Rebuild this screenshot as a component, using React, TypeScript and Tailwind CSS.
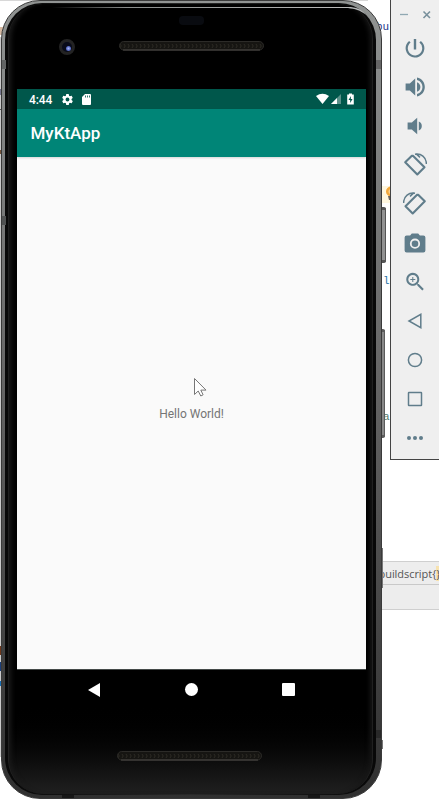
import type { ReactNode } from "react";

function Ic({ children, size = 24 }: { children: ReactNode; size?: number }) {
  return (
    <div className="flex h-[39px] items-center justify-center">
      <svg width={size} height={size} viewBox="0 0 24 24" fill="#607d8b">
        {children}
      </svg>
    </div>
  );
}

function Rotate() {
  return (
    <>
      <path d="M8.600 2.900 2.200 9.300 14.300 21.400 21.500 14.200 10.200 2.900Z" fill="none" stroke="#607d8b" strokeWidth="2.100" strokeLinejoin="round" />
      <path d="M12 1.300C18 .3 23.300 4 23.400 11M13 .8l4 3.600" fill="none" stroke="#607d8b" strokeWidth="1.500" />
    </>
  );
}

function Toolbar() {
  return (
    <div className="absolute left-[390px] top-0 h-[460px] w-[60px] border-b border-l border-[#444] bg-[#efefef]">
      <div className="flex h-[28px] w-[49px] items-center pl-[9px] pt-[2px]">
        <svg width="32" height="10" viewBox="0 0 32 10" fill="none" stroke="#78909c">
          <path d="M0 4.500h8" stroke="#90a8b2" strokeWidth="1.300" />
          <path d="m23.500 1.500 6.500 6.500m0-6.500-6.500 6.500" strokeWidth="1.600" />
        </svg>
      </div>
      <div className="flex w-[48px] flex-col">
        <Ic><path d="M13.200 3h-2.400v10.500h2.400V3zm4.700 1.900-1.500 1.700A7 7 0 0 1 19.200 12a7.200 7.200 0 1 1-11.600-5.400L6.100 4.900A9.300 9.300 0 0 0 2.600 12a9.400 9.400 0 1 0 15.300-7.100z" /></Ic>
        <Ic><path d="M2.600 8.400v7h4.200l5.400 5V3.500l-5.400 4.900zM14 7.200c4.500 1.400 4.500 8.200 0 9.600zM14 2.600V5c7.300 1.900 7.300 12.100 0 14v2.400c10.400-2 10.400-16.800 0-18.800z" /></Ic>
        <Ic><path d="M4.600 8.500v7h4.200l5.400 4.700V3.800L8.800 8.500zM15.800 7.500c4 1.400 4 7.600 0 9z" /></Ic>
        <Ic><Rotate /></Ic>
        <Ic><g transform="translate(24 0) scale(-1 1)"><Rotate /></g></Ic>
        <Ic>
          <path fillRule="evenodd" d="M8.800 2.600 7.100 4.600H3.600A2 2 0 0 0 1.600 6.600v12.800a2 2 0 0 0 2 2h16.800a2 2 0 0 0 2-2V6.600a2 2 0 0 0-2-2h-3.500l-1.700-2zM12 7.600a5.100 5.100 0 1 1 0 10.200 5.100 5.100 0 0 1 0-10.200z" />
          <circle cx="12" cy="12.700" r="3.300" />
        </Ic>
        <Ic>
          <path d="M15.500 14h-.8l-.3-.3A6.500 6.500 0 1 0 13.700 14.400l.3.3v.8l5 5 1.500-1.500zM9.500 14a4.500 4.500 0 1 1 0-9 4.500 4.500 0 0 1 0 9zM12 10h-2v2H9v-2H7V9h2V7h1v2h2z" transform="translate(.3 -.1)" />
        </Ic>
        <Ic><path d="M17.800 5.400v13.200L6 12z" fill="none" stroke="#607d8b" strokeWidth="1.500" /></Ic>
        <Ic><circle cx="12" cy="12" r="6.600" fill="none" stroke="#607d8b" strokeWidth="1.500" /></Ic>
        <Ic><rect x="5.500" y="5.500" width="13" height="13" rx=".5" fill="none" stroke="#607d8b" strokeWidth="1.500" /></Ic>
        <Ic><circle cx="6" cy="12" r="2" /><circle cx="12" cy="12" r="2" /><circle cx="18" cy="12" r="2" /></Ic>
      </div>
    </div>
  );
}

function Editor() {
  return (
    <div className="absolute inset-0 overflow-hidden bg-white">
      <div className="absolute left-0 top-0 h-px w-[368px] bg-[#d8d8d8]" />
      <div className="absolute left-0 top-[27px] h-2 w-2 bg-[#d5b9a2]" />
      <div className="absolute left-0 top-[37px] h-[720px] w-px bg-[#c9c9c9]" />
      <div className="absolute left-0 top-[89px] h-[6px] w-[3px] bg-[#77778f]" />
      <div className="absolute left-0 top-[109px] h-px w-[3px] bg-[#555]" />
      <div className="absolute left-0 top-[150px] h-[4px] w-[3px] bg-[#76553b]" />
      <div className="absolute left-0 top-[646px] h-[9px] w-[3px] bg-[#70381b]" />
      <div className="absolute left-0 top-[662px] h-[9px] w-[3px] bg-[#1b3f7c]" />
      <div className="absolute left-0 top-[681px] h-[5px] w-[3px] bg-[#1870b8]" />
      <span className="absolute left-[376px] top-[20px] font-['Liberation_Mono',monospace] text-[11px] leading-[14px] text-[#26378a]">bu</span>
      <div className="absolute left-[382px] top-[186px] h-[17px] w-2 bg-[#fff7df]" />
      <svg className="absolute left-[385px] top-[186px]" width="10" height="15" viewBox="0 0 10 15">
        <circle cx="6" cy="5.500" r="5" fill="#f3a83c" />
        <circle cx="6" cy="5.500" r="2.500" fill="#f9cf8c" />
        <path d="M3 10h6v4H4z" fill="#6b6259" />
      </svg>
      <span className="absolute left-[383px] top-[274px] font-['Liberation_Mono',monospace] text-[11px] leading-[14px] text-[#2874a6]">l</span>
      <span className="absolute left-[383px] top-[410px] font-['Liberation_Mono',monospace] text-[11px] leading-[14px] text-[#52796b]">a</span>
      <div className="absolute left-[370px] top-[561px] h-[49px] w-[69px] border-y border-[#cfcfcf] bg-[#ededed]">
        <div className="h-[23px] whitespace-nowrap border-b border-[#c9c9c9] pl-[8.500px] font-['Open_Sans',sans-serif] text-[11px] leading-[24px] tracking-[-0.05px] text-[#555]">
          buildscript{"{"}<span className="bg-[#f7e2af]">{"}"}</span>
        </div>
      </div>
    </div>
  );
}

function Grille() {
  return (
    <svg width="145" height="10" viewBox="0 0 145 10">
      <defs>
        <pattern id="mesh" width="4" height="10" patternUnits="userSpaceOnUse">
          <rect width="4" height="10" fill="#161512" />
          <path d="M1 3l1.200 2L1 7" stroke="#2c2a24" fill="none" />
        </pattern>
      </defs>
      <rect x=".5" y=".5" width="144" height="8.500" rx="4.250" fill="url(#mesh)" stroke="#2c2b28" />
      <path d="M4 9h137" stroke="#4c4b46" />
    </svg>
  );
}

function Phone() {
  return (
    <>
      <div className="absolute left-[380px] top-[207px] h-[56px] w-[6px] rounded-r-[2px] border-y-[3px] border-r border-[#555] bg-[#929292]" />
      <div className="absolute left-[380px] top-[329px] h-[109px] w-[5px] rounded-r-[2px] border-y-[3px] border-r border-[#5b5b5b] bg-[#888]" />
      <div className="absolute left-[380px] top-[548px] h-[40px] w-[3px] bg-[#777]" />
      <div className="absolute left-[380px] top-[740px] h-[9px] w-[3px] bg-[#777]" />
      <div className="absolute left-px top-0 h-[799px] w-[381px] overflow-hidden rounded-[39px] border border-[#3a3a3a] bg-linear-to-b from-[#919493] via-[#686868] via-45% to-[#303030] pb-[3px] pl-[3px] pr-[5px] pt-[2px]">
        <div className="h-full rounded-[37px] bg-linear-to-r from-[#080808] via-[#292929] to-[#080808] px-[3px] pb-px pt-px">
          <div className="relative flex h-full flex-col rounded-[35px] border-x border-[#202020] bg-linear-to-b from-black from-88% to-[#202020] pl-[8px] pr-[6px] shadow-[inset_5px_0_5px_-3px_#1b1b1b,inset_-5px_0_5px_-3px_#171717]">
            <div className="relative h-[85px] shrink-0">
              <div className="absolute left-[35px] right-[18px] top-[3px] h-px bg-linear-to-r from-transparent via-[#8a8d8c] via-25% to-[#bbb]" />
              <svg className="absolute right-0 top-[3px]" width="18" height="9" viewBox="0 0 18 9"><path d="M0 0C8 0 14 2 18 8 12 3 7 2 0 1Z" fill="#b6b8b8" /></svg>
              <div className="absolute left-[162px] top-[12px] h-[9px] w-[25px] rounded-[4px] bg-[#090b10]" />
              <div className="absolute left-[42px] top-[35px] flex size-[16px] items-center justify-center rounded-full border-[3px] border-[#232323] bg-[#090b19]">
                <div className="ml-[2px] mt-[3px] size-[5px] rounded-full bg-radial from-[#a9b3f5] to-[#293b9d]" />
              </div>
              <div className="absolute left-[102px] top-[37px]"><Grille /></div>
            </div>
            <main className="flex h-[581px] w-[349px] shrink-0 flex-col border-b border-[#444948] bg-[#fafafa]">
              <div className="flex h-[20px] shrink-0 items-center bg-[#00574b] pl-[12px] pr-[11px] text-white">
                <span className="w-[32px] pt-px text-[12px] font-medium leading-5 tracking-[-0.1px]">4:44</span>
                <svg width="13" height="13" viewBox="0 0 24 24" fill="white"><path d="M19.400 13a8 8 0 0 0 0-2l2.100-1.600a.5.5 0 0 0 .1-.6l-2-3.500-.6-.2-2.500 1-1.700-1L14.400 2.500 14 2h-4l-.5.500-.4 2.600-1.700 1-2.500-1-.6.2-2 3.500.1.600L4.500 11v2l-2.100 1.600-.1.600 2 3.500.6.2 2.500-1 1.700 1 .4 2.600.5.500h4l.5-.5.4-2.600 1.700-1 2.500 1 .6-.2 2-3.500-.1-.6zM12 15.600a3.600 3.600 0 1 1 0-7.200 3.600 3.600 0 0 1 0 7.200z" /></svg>
                <svg className="ml-[8px]" width="9" height="11" viewBox="0 0 9 11"><path d="M3 0h5q1 0 1 1v9q0 1-1 1H1q-1 0-1-1V3z" fill="white" /><path d="M3.500 1.500v2m2-2v2m2-2v2" stroke="#00574b" strokeWidth=".8" /></svg>
                <svg className="ml-auto" width="39" height="12" viewBox="0 0 39 12">
                  <path d="M0 3Q6.500-1.700 13 3L6.500 11z" fill="white" />
                  <path d="M25 1v10H15z" fill="#5b918a" /><path d="M21 5v6h-6z" fill="white" />
                  <path d="M33 1.500V.5h3v1h1.800V11.500h-6.600V1.500z" fill="white" />
                  <path d="m35 3-2.500 4h1.700v3L36.500 6h-1.700z" fill="#00574b" />
                </svg>
              </div>
              <header className="flex h-[48px] shrink-0 items-center bg-[#008577] pl-[13.500px] pt-[2px] text-[17px] font-medium text-white shadow-[0_1px_2px_rgba(0,0,0,.15)]">MyKtApp</header>
              <div className="flex grow items-center justify-center text-[12px] text-[#757575]">
                <span className="pt-px">Hello World!</span>
              </div>
            </main>
            <nav className="flex h-[39px] w-[349px] shrink-0 items-center pl-[70px]">
              <svg width="14" height="16" viewBox="0 0 14 16"><path d="M13 1v14L1 8z" fill="white" /></svg>
              <div className="ml-[84px] size-[12.500px] rounded-full bg-white" />
              <div className="ml-[84px] size-[13px] rounded-[1px] bg-white" />
            </nav>
            <div className="pl-[100px] pt-[42px]"><Grille /></div>
          </div>
        </div>
        <div className="absolute left-0 top-[59px] h-[9px] w-[4px] bg-[#626464]" />
        <div className="absolute left-0 top-[215px] h-[9px] w-[4px] bg-[#505252]" />
        <div className="absolute right-0 top-[59px] h-[9px] w-[5px] bg-[#666]" />
        <div className="absolute right-0 top-[729px] h-[8px] w-[5px] bg-[#292929]" />
        <div className="absolute bottom-0 left-[60px] h-[3px] w-[12px] bg-[#171717]" />
        <div className="absolute bottom-0 right-[61px] h-[3px] w-[12px] bg-[#171717]" />
      </div>
    </>
  );
}

export default function App() {
  return (
    <div className="relative h-[800px] w-[439px] overflow-hidden bg-white font-[Roboto,sans-serif]">
      <Editor />
      <Phone />
      <Toolbar />
      <svg className="absolute left-[193px] top-[377px]" width="16" height="21" viewBox="0 0 16 21">
        <path d="M1.500 1.500v16l3.700-3.500 2.600 5 2.300-1.200-2.300-4.700h5.200z" fill="white" stroke="#777" strokeWidth="1" />
      </svg>
    </div>
  );
}
